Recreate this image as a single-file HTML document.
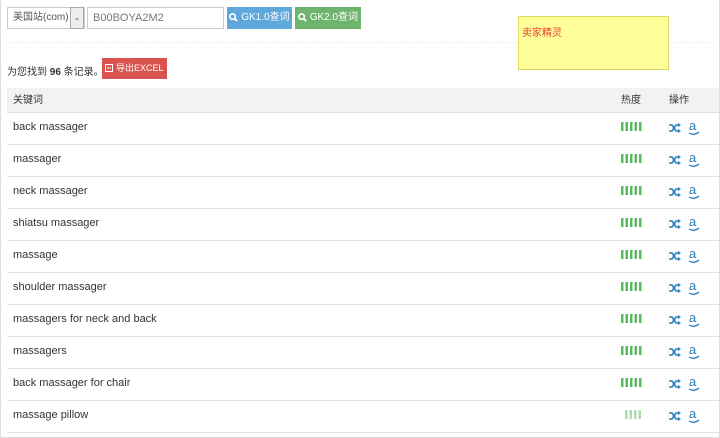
<!DOCTYPE html>
<html><head><meta charset="utf-8"><style>
*{margin:0;padding:0;box-sizing:border-box}
body{width:720px;height:438px;background:#fff;font-family:"Liberation Sans","Noto Sans CJK SC",sans-serif;font-size:11px;color:#333;position:relative;overflow:hidden;border-left:1px solid #ddd;border-right:1px solid #ddd;border-bottom:1px solid #ddd}
.abs{position:absolute}
.sel{left:6px;top:7px;width:78px;height:22px;border:1px solid #ccc;font-size:10px;color:#555;padding:4px 0 0 5px;line-height:12px}
.dd{left:69px;top:7px;width:14px;height:22px;border:1px solid #aaa;background:#eee;font-size:8px;text-align:center;line-height:20px;color:#555}
.inp{left:86px;top:7px;width:137px;height:22px;border:1px solid #ccc;color:#777;font-size:11px;padding:4px 0 0 5px;line-height:13px}
.btn{top:7px;height:22px;color:#fff;font-size:10px;line-height:22px;text-align:center;white-space:nowrap}
.btn svg{vertical-align:-2px}
.sep{left:6px;right:6px;top:42px;border-top:1px dashed #f0f0f0}
.note{left:517px;top:16px;width:151px;height:54px;background:#ffff99;border:1px solid #e0d860;color:#e0403a;font-size:10px;padding:7px 0 0 3px}
.tbl{left:6px;top:88px;width:712px}
.hd{height:25px;background:#f2f2f2;border-bottom:1px solid #ddd;position:relative;font-size:10px;line-height:25px}
.row{height:32px;border-bottom:1px solid #e4e4e4;position:relative;line-height:28px}
.kw{position:absolute;left:6px}
.bars{position:absolute;left:614px;top:9px}
.ic{position:absolute;left:662px;top:10px}
.am{position:absolute;left:681px;top:7px}
</style></head><body>
<div class="abs sel">美国站(com)</div>
<div class="abs dd">⌄</div>
<div class="abs inp">B00BOYA2M2</div>
<div class="abs btn" style="left:226px;width:65px;background:#5fa8dc"><svg width="9" height="9" viewBox="0 0 10 10"><circle cx="4" cy="4" r="3" fill="none" stroke="#fff" stroke-width="1.8"/><path d="M6 6l3 3" stroke="#fff" stroke-width="2"/></svg> GK1.0查词</div>
<div class="abs btn" style="left:294px;width:66px;background:#6db46d"><svg width="9" height="9" viewBox="0 0 10 10"><circle cx="4" cy="4" r="3" fill="none" stroke="#fff" stroke-width="1.8"/><path d="M6 6l3 3" stroke="#fff" stroke-width="2"/></svg> GK2.0查词</div>
<div class="abs sep"></div>
<div class="abs note">卖家精灵</div>
<div class="abs" style="left:6px;top:63px;font-size:10px;white-space:nowrap">为您找到 <b>96</b> 条记录。</div>
<div class="abs" style="left:101px;top:58px;width:65px;height:21px;background:#d9534f;color:#fff;font-size:9px;line-height:21px;white-space:nowrap;text-align:center"><svg width="8" height="8" viewBox="0 0 8 8" style="vertical-align:-1px"><rect x="0.5" y="0.5" width="7" height="7" fill="none" stroke="#fff"/><path d="M2 4h4" stroke="#fff"/></svg> 导出EXCEL</div>
<svg width="0" height="0" style="position:absolute"><defs>
<g id="sh"><path d="M0 2h3l4 6h3M0 8h3l4-6h3" fill="none" stroke="#2a7bb5" stroke-width="1.6"/><path d="M9 0l3 2-3 2zM9 6l3 2-3 2z" fill="#2a7bb5"/></g>
<g id="b5"><rect x="0" y="0" width="2.5" height="9" fill="#5cb85c"/><rect x="4.5" y="0" width="2.5" height="9" fill="#5cb85c"/><rect x="9" y="0" width="2.5" height="9" fill="#5cb85c"/><rect x="13.5" y="0" width="2.5" height="9" fill="#5cb85c"/><rect x="18" y="0" width="2.5" height="9" fill="#5cb85c"/></g>
</defs></svg>
<div class="abs tbl">
<div class="hd"><span style="position:absolute;left:6px">关键词</span><span style="position:absolute;left:614px">热度</span><span style="position:absolute;left:662px">操作</span></div>
<div class="row"><span class="kw">back massager</span><svg class="bars" width="21" height="9"><use href="#b5"/></svg><svg class="ic" width="12" height="10"><use href="#sh"/></svg><svg class="am" width="12" height="16"><text x="1" y="10" font-size="13" font-family="Liberation Sans" fill="#2a7bb5">a</text><path d="M1 13q5 3 10 -1" fill="none" stroke="#2a7bb5" stroke-width="1.3"/></svg></div>
<div class="row"><span class="kw">massager</span><svg class="bars" width="21" height="9"><use href="#b5"/></svg><svg class="ic" width="12" height="10"><use href="#sh"/></svg><svg class="am" width="12" height="16"><text x="1" y="10" font-size="13" font-family="Liberation Sans" fill="#2a7bb5">a</text><path d="M1 13q5 3 10 -1" fill="none" stroke="#2a7bb5" stroke-width="1.3"/></svg></div>
<div class="row"><span class="kw">neck massager</span><svg class="bars" width="21" height="9"><use href="#b5"/></svg><svg class="ic" width="12" height="10"><use href="#sh"/></svg><svg class="am" width="12" height="16"><text x="1" y="10" font-size="13" font-family="Liberation Sans" fill="#2a7bb5">a</text><path d="M1 13q5 3 10 -1" fill="none" stroke="#2a7bb5" stroke-width="1.3"/></svg></div>
<div class="row"><span class="kw">shiatsu massager</span><svg class="bars" width="21" height="9"><use href="#b5"/></svg><svg class="ic" width="12" height="10"><use href="#sh"/></svg><svg class="am" width="12" height="16"><text x="1" y="10" font-size="13" font-family="Liberation Sans" fill="#2a7bb5">a</text><path d="M1 13q5 3 10 -1" fill="none" stroke="#2a7bb5" stroke-width="1.3"/></svg></div>
<div class="row"><span class="kw">massage</span><svg class="bars" width="21" height="9"><use href="#b5"/></svg><svg class="ic" width="12" height="10"><use href="#sh"/></svg><svg class="am" width="12" height="16"><text x="1" y="10" font-size="13" font-family="Liberation Sans" fill="#2a7bb5">a</text><path d="M1 13q5 3 10 -1" fill="none" stroke="#2a7bb5" stroke-width="1.3"/></svg></div>
<div class="row"><span class="kw">shoulder massager</span><svg class="bars" width="21" height="9"><use href="#b5"/></svg><svg class="ic" width="12" height="10"><use href="#sh"/></svg><svg class="am" width="12" height="16"><text x="1" y="10" font-size="13" font-family="Liberation Sans" fill="#2a7bb5">a</text><path d="M1 13q5 3 10 -1" fill="none" stroke="#2a7bb5" stroke-width="1.3"/></svg></div>
<div class="row"><span class="kw">massagers for neck and back</span><svg class="bars" width="21" height="9"><use href="#b5"/></svg><svg class="ic" width="12" height="10"><use href="#sh"/></svg><svg class="am" width="12" height="16"><text x="1" y="10" font-size="13" font-family="Liberation Sans" fill="#2a7bb5">a</text><path d="M1 13q5 3 10 -1" fill="none" stroke="#2a7bb5" stroke-width="1.3"/></svg></div>
<div class="row"><span class="kw">massagers</span><svg class="bars" width="21" height="9"><use href="#b5"/></svg><svg class="ic" width="12" height="10"><use href="#sh"/></svg><svg class="am" width="12" height="16"><text x="1" y="10" font-size="13" font-family="Liberation Sans" fill="#2a7bb5">a</text><path d="M1 13q5 3 10 -1" fill="none" stroke="#2a7bb5" stroke-width="1.3"/></svg></div>
<div class="row"><span class="kw">back massager for chair</span><svg class="bars" width="21" height="9"><use href="#b5"/></svg><svg class="ic" width="12" height="10"><use href="#sh"/></svg><svg class="am" width="12" height="16"><text x="1" y="10" font-size="13" font-family="Liberation Sans" fill="#2a7bb5">a</text><path d="M1 13q5 3 10 -1" fill="none" stroke="#2a7bb5" stroke-width="1.3"/></svg></div>
<div class="row"><span class="kw">massage pillow</span><svg class="bars" width="17" height="9" style="left:618px;opacity:.5"><use href="#b5"/></svg><svg class="ic" width="12" height="10"><use href="#sh"/></svg><svg class="am" width="12" height="16"><text x="1" y="10" font-size="13" font-family="Liberation Sans" fill="#2a7bb5">a</text><path d="M1 13q5 3 10 -1" fill="none" stroke="#2a7bb5" stroke-width="1.3"/></svg></div>
</div>
</body></html>
